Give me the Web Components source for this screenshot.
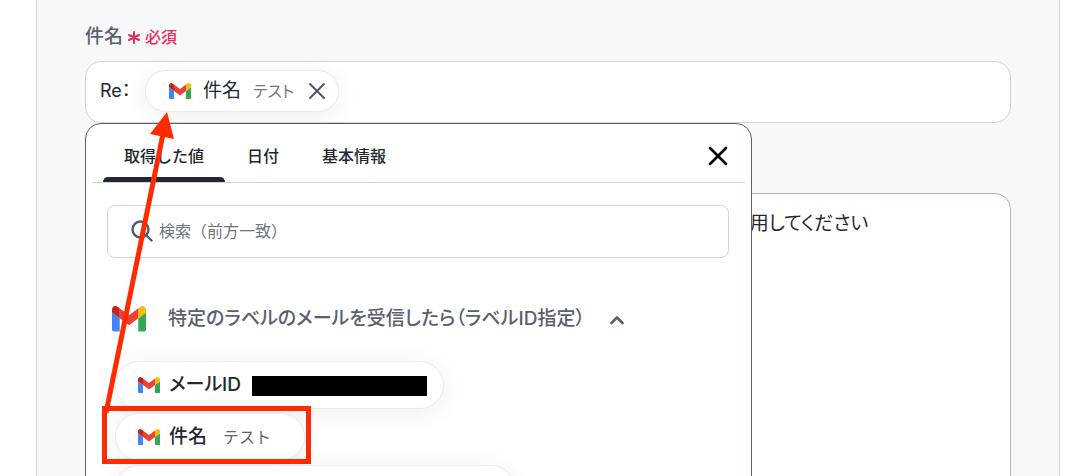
<!DOCTYPE html>
<html lang="ja">
<head>
<meta charset="utf-8">
<meta name="viewport" content="width=device-width, initial-scale=1">
<title>件名</title>
<style>
*{box-sizing:border-box}
body{margin:0;height:100vh;overflow:hidden;background:#fff;color:#222830;font:400 19px/24px Inter,"Noto Sans CJK JP",sans-serif;font-feature-settings:"palt"}
</style>
</head>
<body>
<form-card>
  <subject-field>
    <value-chip slot="value" compact removable>件名<span slot="sample">テスト</span></value-chip>
    <value-panel slot="panel">
      <value-chip class="id">メールID<redacted-value slot="sample"></redacted-value></value-chip>
      <value-chip class="subject">件名<span slot="sample">テスト</span></value-chip>
      <value-chip class="long"></value-chip>
    </value-panel>
    <callout-arrow slot="callout"></callout-arrow>
  </subject-field>
  <body-field></body-field>
</form-card>

<script>
const reset = '*{box-sizing:border-box}button,input,textarea{font:inherit;color:inherit;margin:0;padding:0;border:0;background:none;outline:0;font-feature-settings:inherit}button{cursor:pointer}svg{display:block}';
const define = (name, html) => customElements.define(name, class extends HTMLElement {
  constructor() {
    super();
    const t = document.createElement('template');
    t.innerHTML = html.replace('<style>', '<style>' + reset);
    this.attachShadow({mode: 'open'}).append(t.content.cloneNode(true));
  }
});

define('form-card', `<style>
:host{display:flex;flex-direction:column;gap:70px;margin:0 32px 0 36px;height:100vh;overflow:hidden;padding:25px 48px 0;background:#f6f8fa;border:solid #ced5df;border-width:0 1px}
</style><slot></slot>`);

define('gmail-icon', `<style>
:host{display:block;flex:none;width:22px}
svg{width:100%}
</style><svg viewBox="52 42 88 66" aria-hidden="true"><path fill="#4285f4" d="M58 108h14V74L52 59v43c0 3.32 2.69 6 6 6"/><path fill="#34a853" d="M120 108h14c3.32 0 6-2.69 6-6V59l-20 15"/><path fill="#fbbc04" d="M120 48v26l20-15v-8c0-7.42-8.47-11.65-14.4-7.2"/><path fill="#ea4335" d="M72 74V48l24 18 24-18v26L96 92"/><path fill="#c5221f" d="M52 51v8l20 15V48l-5.6-4.2c-5.94-4.45-14.4-.22-14.4 7.2"/></svg>`);

define('redacted-value', `<style>
:host{display:block;width:175px;height:20px;background:#000}
</style>`);

define('value-chip', `<style>
:host{display:flex;flex:none;align-items:center;width:fit-content;height:48px;padding:0 16px 0 22px;background:#fff;border:1px solid #e8eaf1;border-radius:24px;box-shadow:0 4px 24px rgba(0,0,0,.07);font-weight:500}
:host([compact]){height:42px;padding:0 12px 0 23px;font-weight:400}
.pick{display:flex;align-items:center;gap:9px;white-space:nowrap}
:host([compact]) .pick{gap:12px}
.sample{font-size:16px;font-weight:400;color:#5b6471;font-feature-settings:normal}
.x{display:none;margin-left:14px;color:#4d5866}
:host([removable]) .x{display:block}
:host([compact]) .sample{color:#777;font-feature-settings:"palt"}
:host(.id) .sample{margin:2px 0 0 2px}
:host(.subject){width:190px}
:host(.subject) .sample{margin-left:7px}
:host(.long){width:400px}
</style><button class="pick" type="button"><gmail-icon></gmail-icon><span><slot></slot></span><span class="sample"><slot name="sample"></slot></span></button>
<button class="x" type="button" aria-label="削除"><svg width="18" height="18" viewBox="0 0 18 18" fill="none" stroke="currentColor" stroke-width="2" stroke-linecap="round"><path d="M2 2l14 14M16 2L2 16"/></svg></button>`);

define('subject-field', `<style>
:host{display:block;flex:none}
.label{display:flex;align-items:center;gap:4px;height:24px;margin-bottom:12px}
label{font-weight:500;color:#58616d}
.req{display:flex;align-items:center;gap:4px;color:#f0285a;font-size:16px;font-weight:500}
.wrap{position:relative}
.box{display:flex;align-items:center;height:62px;padding:0 14px 2px;background:#fff;border:1px solid #ced5df;border-radius:16px}
input{width:45px;font-size:18px}
slot[name=panel]::slotted(*){position:absolute;z-index:1;top:100%;left:0;width:72%}
slot[name=callout]::slotted(*){position:absolute;z-index:2;top:0;left:0}
</style>
<div class="label"><label for="subject">件名</label><span class="req"><svg width="14" height="14" viewBox="0 0 14 14" fill="none" stroke="currentColor" stroke-width="2" stroke-linecap="round" aria-hidden="true"><path d="M7 2v11M2 5l10 5M12 5L2 10"/></svg>必須</span></div>
<div class="wrap"><div class="box"><input id="subject" type="text" value="Re："><slot name="value"></slot></div>
<slot name="panel"></slot><slot name="callout"></slot></div>`);

define('value-panel', `<style>
:host{display:block;height:480px;padding:0 6px;background:#fff;border:1px solid #56606e;border-radius:16px}
header{display:flex;align-items:stretch;height:59px;padding:0 15px 0 11px;border-bottom:1px solid #ced5df}
nav{display:flex;gap:1px;flex:1;font-size:16px;font-weight:500;font-feature-settings:normal}
nav button{padding:10px 21px 0;border-bottom:5px solid transparent}
nav button[aria-selected=true]{position:relative}
nav button[aria-selected=true]::after{content:"";position:absolute;inset:auto 0 -5px;height:5px;border-radius:5px 5px 0 0;background:#222830}
.close{color:#000;align-self:center;margin-top:5px}
.main{display:flex;flex-direction:column;gap:4px;padding:0 16px 0 23px}
.search{display:flex;align-items:center;gap:6px;height:53px;margin:22px 0 40px -8px;padding:0 23px 2px;border:1px solid #ced5df;border-radius:8px;color:#4d5866}
.search input{flex:1;font-size:16px;font-feature-settings:normal}
input::placeholder{color:#6b7480;opacity:1}
.group{display:flex;align-items:center;gap:22px;align-self:start;height:34px;margin:0 0 21px -3px;font-weight:500;color:#58616d}
.group gmail-icon{width:34px}
.group svg{margin-left:2px}
</style>
<header><nav role="tablist"><button role="tab" aria-selected="true">取得した値</button><button role="tab">日付</button><button role="tab">基本情報</button></nav>
<button class="close" type="button" aria-label="閉じる"><svg width="24" height="24" viewBox="0 0 24 24" fill="none" stroke="currentColor" stroke-width="2.6" stroke-linecap="round"><path d="M4 4l16 16M20 4L4 20"/></svg></button></header>
<div class="main">
<div class="search"><svg width="22" height="22" viewBox="0 0 22 22" fill="none" stroke="currentColor" stroke-width="2.3" stroke-linecap="round" aria-hidden="true"><circle cx="9.5" cy="9.5" r="8"/><path d="M15.3 15.3L20.5 20.5"/></svg><input type="text" aria-label="検索" placeholder="検索（前方一致）"></div>
<button class="group" type="button" aria-expanded="true"><gmail-icon></gmail-icon><span>特定のラベルのメールを受信したら（ラベルID指定）</span><svg width="16" height="16" viewBox="0 0 16 16" fill="none" stroke="currentColor" stroke-width="2.6" stroke-linecap="round" stroke-linejoin="round" aria-hidden="true"><path d="M2.5 12L8 6.500L13.500 12"/></svg></button>
<slot></slot>
</div>`);

define('callout-arrow', `<style>
:host{display:block;width:240px;pointer-events:none}
</style><svg width="240" height="410" viewBox="85 61 240 410" aria-hidden="true"><g fill="none" stroke="#ff2a00" stroke-width="5"><path d="M106 413L163 134"/><path d="M104.500 408.500H308.500V461.500H104.500Z"/></g><path fill="#ff2a00" d="M167 112L150 134L174 139Z"/></svg>`);

define('body-field', `<style>
:host{display:flex;flex:none;height:480px}
textarea{flex:1;height:100%;padding:17px 20px 0 calc(72% - 3px);resize:none;background:#fff;border:1px solid #a9b3be;border-radius:16px;line-height:26px}
</style><textarea aria-label="本文">用してください</textarea>`);
</script>
</body>
</html>
